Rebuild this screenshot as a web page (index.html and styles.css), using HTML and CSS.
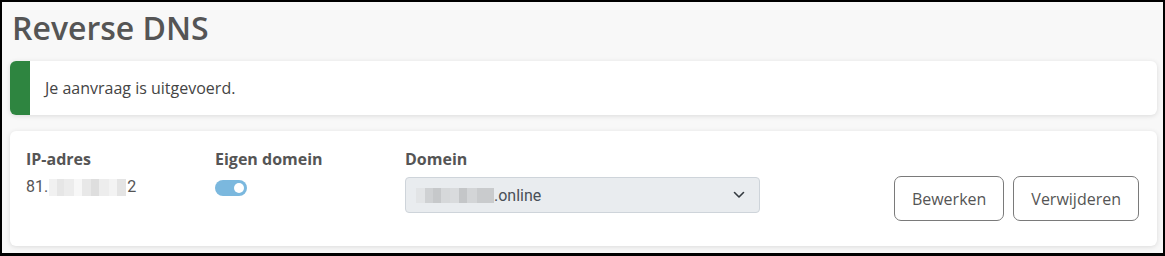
FILE: index.html
```html
<!DOCTYPE html>
<html lang="nl">
<head>
<meta charset="utf-8">
<title>Reverse DNS</title>
<link rel="stylesheet" href="styles.css">
</head>
<body>
<div class="page">
  <h1 class="title">Reverse DNS</h1>
  <div class="alert">
    <div class="alert-bar"></div>
    <div class="alert-text">Je aanvraag is uitgevoerd.</div>
  </div>
  <div class="card">
    <div class="col col-ip">
      <div class="label">IP-adres</div>
      <div class="value">81.<span class="blur blur-ip"></span>2</div>
    </div>
    <div class="col col-own">
      <div class="label">Eigen domein</div>
      <div class="toggle"><span class="knob"></span></div>
    </div>
    <div class="col col-domain">
      <div class="label">Domein</div>
      <div class="select">
        <span class="select-text"><span class="blur blur-domain"></span>.online</span>
        <svg class="chevron" width="12" height="8" viewBox="0 0 12 8"><path d="M1.5 1.5 L6 6 L10.5 1.5" fill="none" stroke="#343a40" stroke-width="1.6" stroke-linecap="round" stroke-linejoin="round"/></svg>
      </div>
    </div>
    <div class="actions">
      <button class="btn">Bewerken</button>
      <button class="btn">Verwijderen</button>
    </div>
  </div>
</div>
</body>
</html>
```

FILE: styles.css
```css
html, body {
  margin: 0;
  padding: 0;
  background: #000;
}
body {
  width: 1165px;
  height: 256px;
  box-sizing: border-box;
  padding: 2px 2px 3px 2px;
  font-family: "Open Sans", "Liberation Sans", sans-serif;
}
.page {
  background: #f8f8f8;
  height: 100%;
  box-sizing: border-box;
  padding: 0 6px 0 8px;
  overflow: hidden;
}
.title {
  margin: 0;
  padding: 4px 0 0 2px;
  font-size: 32px;
  line-height: 44px;
  font-weight: 600;
  color: #555;
  height: 59px;
  box-sizing: border-box;
}
.alert {
  display: flex;
  height: 54px;
  background: #fff;
  border-radius: 6px;
  overflow: hidden;
  box-shadow: 0 1px 5px rgba(0,0,0,0.12);
}
.alert-bar {
  width: 20px;
  background: #2e8540;
  flex: none;
}
.alert-text {
  display: flex;
  align-items: center;
  padding-left: 15px;
  font-size: 16px;
  color: #444;
}
.card {
  margin-top: 16px;
  height: 115px;
  box-sizing: border-box;
  background: #fff;
  border-radius: 6px;
  box-shadow: 0 1px 5px rgba(0,0,0,0.12);
  display: grid;
  grid-template-columns: 189px 190px 355px 1fr;
  padding: 16px 18px 25px 16px;
}
.label {
  font-size: 16px;
  font-weight: 700;
  color: #555;
  line-height: 24px;
}
.value {
  font-family: Roboto, "Liberation Sans", sans-serif;
  font-size: 16px;
  color: #555;
  line-height: 22px;
  margin-top: 5px;
  display: flex;
  align-items: center;
}
.blur {
  display: inline-block;
  height: 17px;
  background:
    linear-gradient(90deg,
      #f1f1f1 0 10%, #e6e6e6 10% 20%, #ececec 20% 33%, #f7f7f7 33% 43%,
      #e8e8e8 43% 55%, #dedede 55% 65%, #ededed 65% 78%, #f3f3f3 78% 88%, #e4e4e4 88% 100%);
}
.blur-ip {
  width: 77px;
  margin: 0 1px;
}
.toggle {
  margin-top: 9px;
  width: 32px;
  height: 16px;
  border-radius: 8px;
  background: #7bb8de;
  position: relative;
}
.knob {
  position: absolute;
  right: 3px;
  top: 3px;
  width: 10px;
  height: 10px;
  border-radius: 50%;
  background: #fff;
}
.select {
  margin-top: 6px;
  height: 36px;
  box-sizing: border-box;
  background: #e9ecef;
  border: 1px solid #ced4da;
  border-radius: 4px;
  display: flex;
  align-items: center;
  justify-content: space-between;
  padding: 0 14px 0 10px;
}
.select-text {
  font-family: Roboto, "Liberation Sans", sans-serif;
  font-size: 16px;
  color: #495057;
  display: flex;
  align-items: center;
}
.blur-domain {
  width: 78px;
  height: 15px;
  background:
    linear-gradient(90deg,
      #e2e4e6 0 12%, #cfd1d3 12% 22%, #c6c8ca 22% 32%, #d6d8da 32% 44%,
      #d9dbdd 44% 55%, #c4c6c8 55% 66%, #d3d5d7 66% 78%, #c9cbcd 78% 100%);
}
.chevron {
  display: block;
}
.actions {
  display: flex;
  justify-content: flex-end;
  align-items: flex-end;
  gap: 9px;
}
.btn {
  font-family: "Open Sans", "Liberation Sans", sans-serif;
  font-size: 16px;
  color: #555;
  background: #fff;
  border: 1px solid #7a7a7a;
  border-radius: 7px;
  height: 45px;
  padding: 0 17px;
  cursor: pointer;
}
```
